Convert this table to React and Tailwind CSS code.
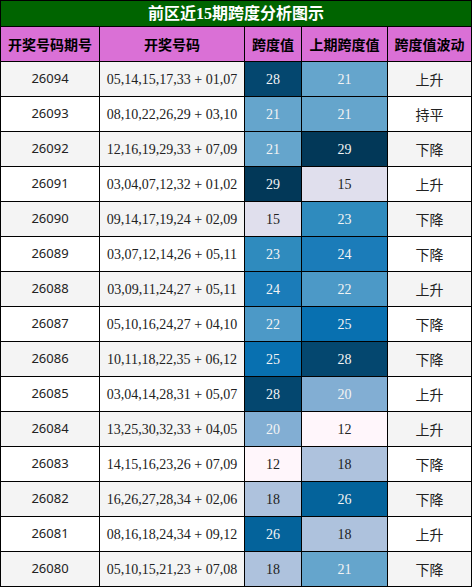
import React from "react";

const rows = [
  ["26094", "05,14,15,17,33 + 01,07", 28, 21, "上升"],
  ["26093", "08,10,22,26,29 + 03,10", 21, 21, "持平"],
  ["26092", "12,16,19,29,33 + 07,09", 21, 29, "下降"],
  ["26091", "03,04,07,12,32 + 01,02", 29, 15, "上升"],
  ["26090", "09,14,17,19,24 + 02,09", 15, 23, "下降"],
  ["26089", "03,07,12,14,26 + 05,11", 23, 24, "下降"],
  ["26088", "03,09,11,24,27 + 05,11", 24, 22, "上升"],
  ["26087", "05,10,16,24,27 + 04,10", 22, 25, "下降"],
  ["26086", "10,11,18,22,35 + 06,12", 25, 28, "下降"],
  ["26085", "03,04,14,28,31 + 05,07", 28, 20, "上升"],
  ["26084", "13,25,30,32,33 + 04,05", 20, 12, "上升"],
  ["26083", "14,15,16,23,26 + 07,09", 12, 18, "下降"],
  ["26082", "16,26,27,28,34 + 02,06", 18, 26, "下降"],
  ["26081", "08,16,18,24,34 + 09,12", 26, 18, "上升"],
  ["26080", "05,10,15,21,23 + 07,08", 18, 21, "下降"],
];

// PuBu 色阶
const spanColor = {
  12: "bg-[#fff6fb] text-[#222]",
  15: "bg-[#e0dfed] text-[#222]",
  18: "bg-[#aec2dd] text-[#222]",
  20: "bg-[#82aed3] text-[#f4f4f4]",
  21: "bg-[#65a5cc] text-[#f4f4f4]",
  22: "bg-[#4c99c7] text-[#f4f4f4]",
  23: "bg-[#2f8bbe] text-[#f4f4f4]",
  24: "bg-[#1b7cb9] text-[#f4f4f4]",
  25: "bg-[#0870b0] text-[#f4f4f4]",
  26: "bg-[#04639b] text-[#f4f4f4]",
  28: "bg-[#04476f] text-[#f4f4f4]",
  29: "bg-[#023858] text-[#f4f4f4]",
};

const cell = "flex items-center justify-center h-[34px]";
const serif = "font-['Liberation_Serif','Noto_Sans_CJK_SC',serif]";
const cjk = "font-['Noto_Sans_CJK_SC',sans-serif]";

export default function App() {
  return (
    <div className="w-[472px] bg-black p-px">
      <div className="grid grid-cols-[98px_144px_56px_85px_83px] gap-px">
        <div
          className={`col-span-5 h-[25px] flex items-center justify-center bg-[#006400] text-white text-[16px] font-bold ${serif}`}
        >
          前区近15期跨度分析图示
        </div>
        {["开奖号码期号", "开奖号码", "跨度值", "上期跨度值", "跨度值波动"].map((h) => (
          <div key={h} className={`${cell} bg-[#da70d6] text-black text-[14px] font-bold ${cjk}`}>
            {h}
          </div>
        ))}
        {rows.map(([no, nums, span, prev, trend], i) => {
          const bg = i % 2 === 0 ? "bg-[#f4f4f4]" : "bg-white";
          return (
            <React.Fragment key={no}>
              <div className={`${cell} ${bg} text-[#222] text-[13px] font-['Noto_Sans',sans-serif]`}>{no}</div>
              <div className={`${cell} ${bg} text-[#222] text-[14px] ${serif}`}>{nums}</div>
              <div className={`${cell} ${spanColor[span]} text-[14px] ${serif}`}>{span}</div>
              <div className={`${cell} ${spanColor[prev]} text-[14px] ${serif}`}>{prev}</div>
              <div className={`${cell} ${bg} text-[#222] text-[14px] ${cjk}`}>{trend}</div>
            </React.Fragment>
          );
        })}
      </div>
    </div>
  );
}
